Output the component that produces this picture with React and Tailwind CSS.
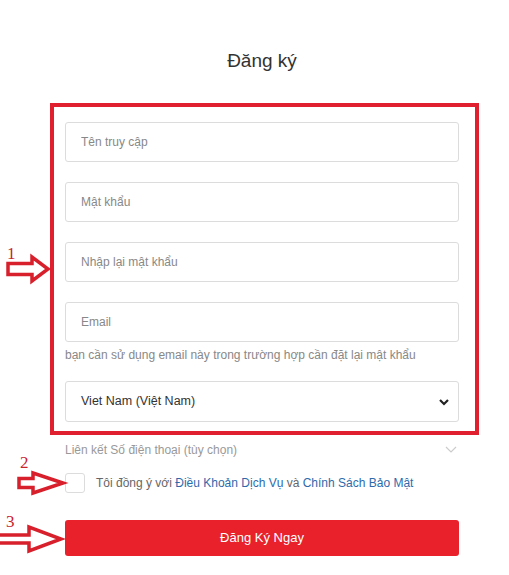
import React from "react";

function Arrow({ x, y, shaft, head, h, sh }) {
  // x,y = left edge / centre line; shaft length, head length, head height h, shaft height sh
  const d = `M${x} ${y - sh / 2} L${x + shaft} ${y - sh / 2} L${x + shaft} ${y - h / 2} L${x + shaft + head} ${y} L${x + shaft} ${y + h / 2} L${x + shaft} ${y + sh / 2} L${x} ${y + sh / 2} Z`;
  return <path d={d} fill="#fff" stroke="#d8202c" strokeWidth="3.5" strokeLinejoin="miter" />;
}

function Field({ placeholder }) {
  return (
    <input
      type="text"
      placeholder={placeholder}
      className="w-full h-[40px] border border-[#dcdcdc] rounded-[3px] px-[15px] text-[12px] text-[#333] placeholder:text-[#888] outline-none bg-white"
    />
  );
}

export default function App() {
  return (
    <div className="relative w-[509px] h-[575px] bg-white font-['Liberation_Sans',Arial,sans-serif]">
      <h1 className="pt-[47px] ml-[65px] w-[394px] text-center text-[19px] leading-[28px] text-[#333]">Đăng ký</h1>

      <div className="mt-[28px] ml-[50px] w-[429px] border-[4px] border-[#e0202e] pt-[15px] pl-[11px] pr-[16px] pb-[9px]">
        <div className="flex flex-col gap-[20px]">
          <Field placeholder="Tên truy cập" />
          <Field placeholder="Mật khẩu" />
          <Field placeholder="Nhập lại mật khẩu" />
          <Field placeholder="Email" />
        </div>
        <p className="mt-[4px] text-[12px] leading-[18px] text-[#888]">bạn cần sử dụng email này trong trường hợp cần đặt lại mật khẩu</p>
        <div className="mt-[17px] h-[41px] border border-[#dcdcdc] rounded-[3px] flex items-center justify-between pl-[15px] pr-[8px] text-[12.5px] text-[#333]">
          <span>Viet Nam (Việt Nam)</span>
          <svg width="12" height="12" viewBox="0 0 12 12">
            <path d="M2 4 L6 8 L10 4" fill="none" stroke="#222" strokeWidth="2.2" />
          </svg>
        </div>
      </div>

      <div className="ml-[65px] w-[394px]">
        <div className="mt-[7px] flex items-center justify-between text-[12px] leading-[16px] text-[#999]">
          <span>Liên kết Số điện thoại (tùy chọn)</span>
          <svg width="12" height="8" viewBox="0 0 12 8" className="mr-[2px]">
            <path d="M1 1 L6 6 L11 1" fill="none" stroke="#ccc" strokeWidth="1.2" />
          </svg>
        </div>
        <div className="mt-[15px] flex items-center gap-[11px] text-[12px]">
          <div className="w-[20px] h-[20px] border border-[#dcdcdc] rounded-[3px]" />
          <span className="text-[#666]">
            Tôi đồng ý với <a className="text-[#2e6aab]">Điều Khoản Dịch Vụ</a> và <a className="text-[#2e6aab]">Chính Sách Bảo Mật</a>
          </span>
        </div>
        <button className="mt-[27px] w-full h-[36px] rounded-[3px] bg-[#e8212b] text-white text-[13px]">Đăng Ký Ngay</button>
      </div>

      <svg className="absolute inset-0 pointer-events-none" width="509" height="575">
        <text x="7" y="259" fontFamily="Liberation Serif, serif" fontSize="17" fill="#c8232c">1</text>
        <Arrow x={8} y={269} shaft={24} head={16} h={24} sh={11} />
        <text x="20" y="468" fontFamily="Liberation Serif, serif" fontSize="17" fill="#c8232c">2</text>
        <Arrow x={19} y={483} shaft={14} head={30} h={20} sh={9} />
        <text x="6" y="527" fontFamily="Liberation Serif, serif" fontSize="17" fill="#c8232c">3</text>
        <Arrow x={-2} y={539} shaft={31} head={32} h={24} sh={8} />
      </svg>
    </div>
  );
}
